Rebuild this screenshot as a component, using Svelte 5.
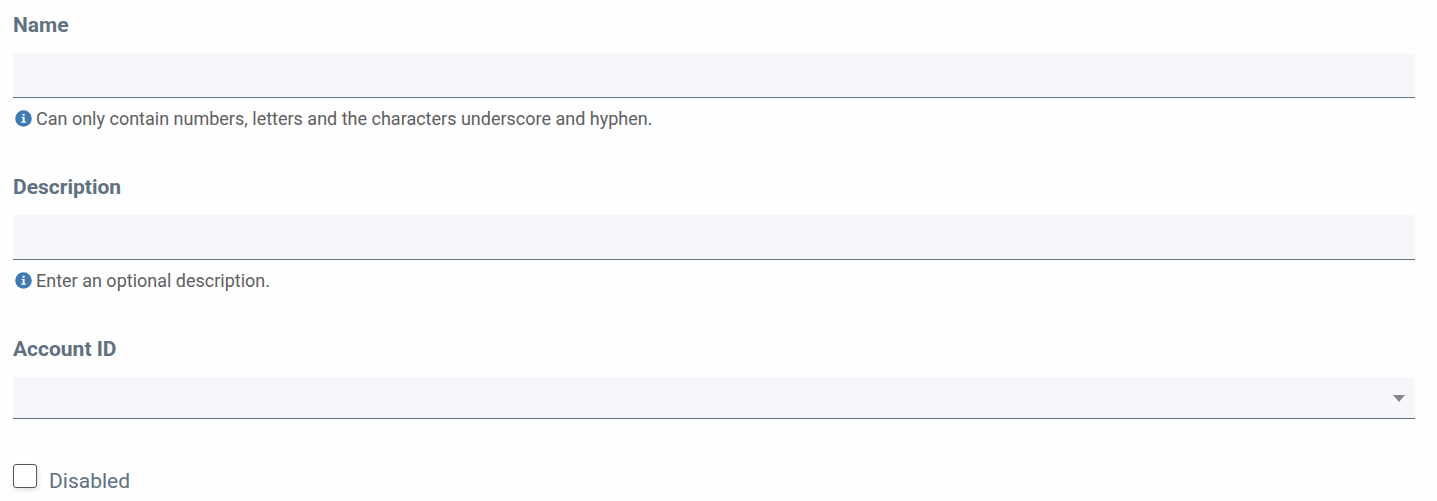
<script>
  let name = $state('');
  let description = $state('');
  let account = $state('');
  let disabled = $state(false);
</script>

{#snippet info()}
  <svg class="info" viewBox="0 0 17 17" aria-hidden="true">
    <circle cx="8.500" cy="8.500" r="8.300" fill="#3f7ab5" />
    <path d="M7.600 3.800h2v2h-2zM6.600 7h3v4.600h1.200v1.100H6.300v-1.100h1.400V8.100H6.600z" fill="#fff" />
  </svg>
{/snippet}

<form>
  <div class="field">
    <label class="title" for="name">Name</label>
    <input class="control" id="name" type="text" aria-describedby="name-hint" bind:value={name} />
    <p class="hint" id="name-hint">{@render info()}Can only contain numbers, letters and the characters underscore and hyphen.</p>
  </div>
  <div class="field">
    <label class="title" for="description">Description</label>
    <input class="control" id="description" type="text" aria-describedby="description-hint" bind:value={description} />
    <p class="hint" id="description-hint">{@render info()}Enter an optional description.</p>
  </div>
  <div class="field">
    <label class="title" for="account">Account ID</label>
    <div class="picker">
      <select class="control" id="account" bind:value={account}>
        <option value=""></option>
      </select>
      <svg class="arrow" viewBox="0 0 12 7" aria-hidden="true"><path d="M0 0h12L6 7z" fill="#888" /></svg>
    </div>
  </div>
  <label class="check">
    <input type="checkbox" bind:checked={disabled} />
    <span>Disabled</span>
  </label>
</form>

<style>
  :global(body) {
    background: #fefefe;
  }
  form {
    padding: 13px 22px 0 13px;
    font-family: Roboto, sans-serif;
    color: #607080;
  }
  .field {
    display: flex;
    flex-direction: column;
    margin-bottom: 44px;
  }
  .title {
    font-size: 21px;
    line-height: 25px;
    font-weight: 700;
    margin-bottom: 15px;
  }
  .control {
    box-sizing: border-box;
    width: 100%;
    height: 45px;
    margin: 0;
    padding: 0 12px;
    border: 0;
    border-bottom: 1px solid #607080;
    border-radius: 3px 3px 0 0;
    background: #f6f7fb;
    color: #444;
    font: 18px/24px Roboto, sans-serif;
    appearance: none;
  }
  select.control {
    height: 42px;
    border-radius: 0;
  }
  .hint {
    display: flex;
    align-items: flex-start;
    gap: 4px;
    margin: 9px 0 0;
    padding-left: 2px;
    font-size: 18px;
    line-height: 24px;
    color: #606060;
  }
  .info {
    flex: none;
    width: 17px;
    height: 17px;
    margin-top: 3px;
  }
  .picker {
    display: grid;
    align-items: center;
  }
  .picker > * {
    grid-area: 1 / 1;
  }
  .arrow {
    justify-self: end;
    width: 12px;
    height: 7px;
    margin-right: 10px;
    pointer-events: none;
  }
  .check {
    display: flex;
    align-items: flex-start;
    gap: 12px;
    padding-top: 1px;
    font-size: 21px;
    line-height: 24px;
  }
  .check input {
    flex: none;
    box-sizing: border-box;
    width: 24px;
    height: 24px;
    margin: 0;
    border: 1px solid #555;
    border-radius: 3px;
    background: #fff;
    appearance: none;
    box-shadow: 1px 2px 5px rgb(0 0 0 / 12%);
  }
  .check input:checked {
    background: #3f7ab5;
  }
  .check span {
    padding-top: 5px;
  }
</style>
